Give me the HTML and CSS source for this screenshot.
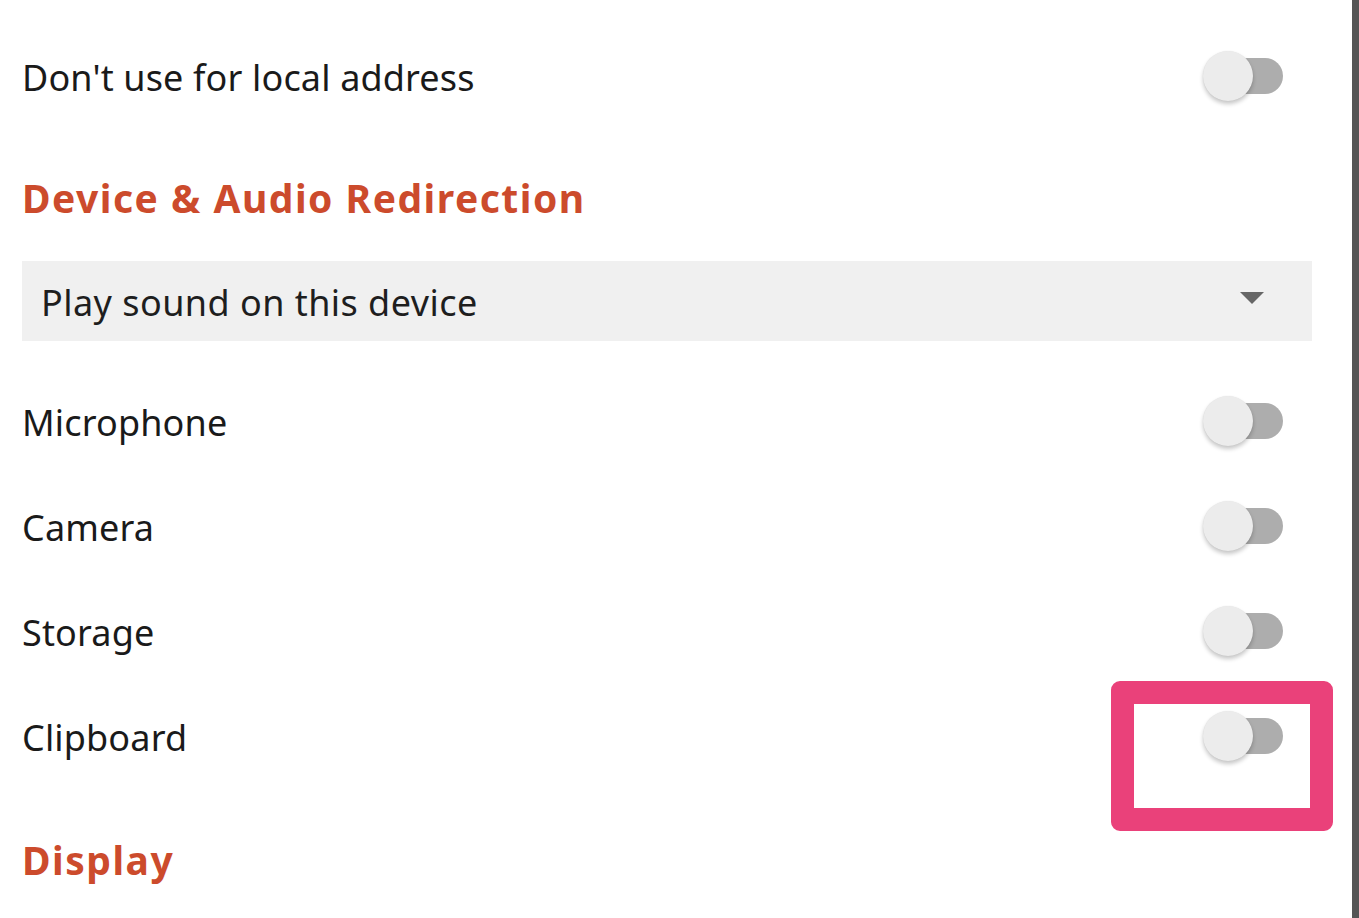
FILE: index.html
```html
<!DOCTYPE html>
<html lang="en">
<head>
<meta charset="utf-8">
<title>Settings</title>
<link rel="stylesheet" href="styles.css">
</head>
<body>
<div class="page">
  <main class="content">
    <div class="row first">
      <span class="label">Don't use for local address</span>
      <span class="switch"><span class="track"></span><span class="thumb"></span></span>
    </div>
    <h2 class="section">Device &amp; Audio Redirection</h2>
    <div class="select">
      <span class="select-text">Play sound on this device</span>
      <svg class="caret" width="26" height="14" viewBox="0 0 26 14"><path d="M1 1 L25 1 L13 13 Z" fill="#666"/></svg>
    </div>
    <div class="list">
      <div class="row">
        <span class="label">Microphone</span>
        <span class="switch"><span class="track"></span><span class="thumb"></span></span>
      </div>
      <div class="row">
        <span class="label">Camera</span>
        <span class="switch"><span class="track"></span><span class="thumb"></span></span>
      </div>
      <div class="row">
        <span class="label">Storage</span>
        <span class="switch"><span class="track"></span><span class="thumb"></span></span>
      </div>
      <div class="row">
        <span class="label">Clipboard</span>
        <span class="switch highlighted"><span class="track"></span><span class="thumb"></span><span class="mark"></span></span>
      </div>
    </div>
    <h2 class="section last">Display</h2>
  </main>
  <div class="scrollbar"></div>
</div>
</body>
</html>
```
FILE: styles.css
```css
* { box-sizing: border-box; }
html, body { margin: 0; padding: 0; background: #fff; }
body {
  font-family: "Noto Sans", "Open Sans", sans-serif;
  color: #1a1a1a;
  overflow: hidden;
}
.page {
  display: flex;
  width: 1359px;
  height: 918px;
}
.content {
  flex: 1;
  padding: 25px 40px 0 22px;
}
.scrollbar {
  width: 7px;
  background: #555;
}
.row {
  height: 105px;
  display: flex;
  align-items: center;
  justify-content: space-between;
  padding-right: 29px;
}
.label {
  font-size: 36px;
  line-height: 50px;
  letter-spacing: 0.15px;
}
.section {
  margin: 0;
  padding: 43px 0 38px;
  font-size: 39px;
  line-height: 50px;
  font-weight: 700;
  letter-spacing: 1.5px;
  color: #cc4b2c;
}
.section.last { padding-top: 45px; }
.select {
  height: 80px;
  background: #f0f0f0;
  display: flex;
  align-items: center;
  justify-content: space-between;
  padding: 4px 47px 0 19px;
  margin-bottom: 29px;
}
.select-text {
  font-size: 36px;
  line-height: 50px;
  letter-spacing: 0.45px;
  color: #1e1e1e;
}
.caret { margin-top: -11px; }
.switch {
  position: relative;
  width: 80px;
  height: 50px;
  margin-top: -4px;
}
.track {
  position: absolute;
  left: 10px;
  right: 0;
  top: 7px;
  height: 36px;
  border-radius: 18px;
  background: #adadad;
}
.thumb {
  position: absolute;
  left: 0;
  top: 0;
  width: 50px;
  height: 50px;
  border-radius: 50%;
  background: #ececec;
  box-shadow: 0 3px 4px rgba(0,0,0,0.22), 0 0 1px rgba(0,0,0,0.1);
}
.mark {
  position: absolute;
  left: -92px;
  top: -30px;
  width: 222px;
  height: 150px;
  border: 23px solid #ea417a;
  border-radius: 9px;
}
```
